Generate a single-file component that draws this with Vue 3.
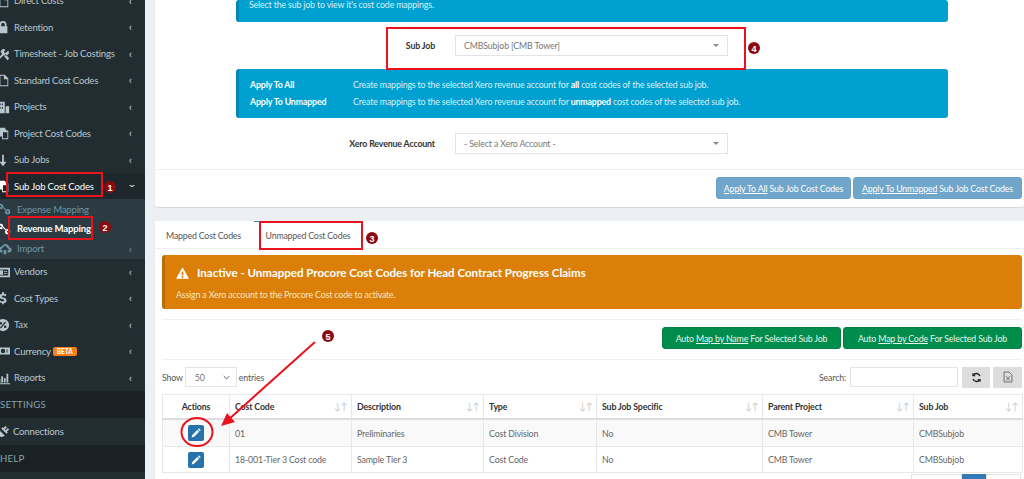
<template>
  <div class="page">
    <aside class="sidebar">
      <template v-for="item in menu" :key="item.label">
        <div v-if="item.header" class="menu-header">{{ item.label }}</div>
        <div v-else-if="item.sub" class="menu-sub" :class="{ bright: item.bright }">
          <svg class="icon" viewBox="0 0 16 16"><path :d="icons[item.icon]" fill-rule="evenodd" /></svg>
          <span>{{ item.label }}</span>
          <span v-if="item.arrow" class="chev">‹</span>
        </div>
        <div v-else class="menu-row" :class="{ open: item.open, plain: item.plain }">
          <svg class="icon" viewBox="0 0 16 16"><path :d="icons[item.icon]" fill-rule="evenodd" /></svg>
          <span>{{ item.label }}</span>
          <span v-if="item.beta" class="beta">BETA</span>
          <span v-if="item.open" class="chev down">‹</span>
          <span v-else-if="!item.plain" class="chev">‹</span>
        </div>
      </template>
    </aside>

    <main class="main">
      <section class="box top-box">
        <div class="center-col">
          <div class="info first">Select the sub job to view it's cost code mappings.</div>
          <div class="form-row sub-job-row">
            <label>Sub Job</label>
            <div class="select">CMBSubjob [CMB Tower]<i class="caret"></i></div>
          </div>
          <div class="info apply">
            <div class="apply-line"><b>Apply To All</b><span>Create mappings to the selected Xero revenue account for <b>all</b> cost codes of the selected sub job.</span></div>
            <div class="apply-line"><b>Apply To Unmapped</b><span>Create mappings to the selected Xero revenue account for <b>unmapped</b> cost codes of the selected sub job.</span></div>
          </div>
          <div class="form-row xero-row">
            <label>Xero Revenue Account</label>
            <div class="select">- Select a Xero Account -<i class="caret"></i></div>
          </div>
        </div>
        <div class="box-footer">
          <button class="btn-blue all"><u>Apply To All</u> Sub Job Cost Codes</button>
          <button class="btn-blue unmapped"><u>Apply To Unmapped</u> Sub Job Cost Codes</button>
        </div>
      </section>

      <section class="box bottom-box">
        <div class="tabs">
          <div class="tab">Mapped Cost Codes</div>
          <div class="tab active">Unmapped Cost Codes</div>
        </div>
        <div class="tab-body">
          <div class="warning">
            <h4>
              <svg viewBox="0 0 16 14" width="13" height="12"><path fill="#fff" fill-rule="evenodd" d="M8 0l8 14H0zM7 5v5h2V5zm0 6v2h2v-2z" /></svg>
              Inactive - Unmapped Procore Cost Codes for Head Contract Progress Claims
            </h4>
            <p>Assign a Xero account to the Procore Cost code to activate.</p>
          </div>
          <div class="auto-bar">
            <button class="btn-green">Auto <u>Map by Name</u> For Selected Sub Job</button>
            <button class="btn-green">Auto <u>Map by Code</u> For Selected Sub Job</button>
          </div>
          <div class="table-tools">
            <div class="show">
              Show
              <div class="len">50<svg viewBox="0 0 10 6" width="7" height="5"><path d="M1 1l4 4 4-4" fill="none" stroke="#555" stroke-width="1.4" /></svg></div>
              entries
            </div>
            <div class="search">
              Search:
              <div class="search-box"></div>
              <button class="tool">
                <svg viewBox="0 0 16 16" width="11" height="11"><path d="M13 6a5.5 5.5 0 0 0-10-1M3 10a5.5 5.5 0 0 0 10 1" fill="none" stroke="#222" stroke-width="2" /><path d="M2 1v5h5zM14 15v-5H9z" fill="#222" /></svg>
              </button>
              <button class="tool">
                <svg viewBox="0 0 14 16" width="10" height="12"><path d="M1.5 1h7l4 4v10h-11z" fill="none" stroke="#444" /><path d="M4.5 7l5 6m0-6l-5 6" stroke="#444" /></svg>
              </button>
            </div>
          </div>
          <table>
            <colgroup>
              <col v-for="c in columns" :key="c.name" :style="{ width: c.width + 'px' }" />
            </colgroup>
            <thead>
              <tr>
                <th v-for="c in columns" :key="c.name" :class="{ center: !c.sort }">
                  {{ c.name }}<span v-if="c.sort" class="sort">↓↑</span>
                </th>
              </tr>
            </thead>
            <tbody>
              <tr v-for="row in rows" :key="row[0]">
                <td class="center">
                  <button class="edit">
                    <svg viewBox="0 0 16 16" width="10" height="10"><path fill="#fff" d="M1 15l1-4 8-8 3 3-8 8zM11 2l1.5-1.5 3 3L14 5z" /></svg>
                  </button>
                </td>
                <td v-for="cell in row" :key="cell">{{ cell }}</td>
              </tr>
            </tbody>
          </table>
          <div class="pager"><span></span><span class="on"></span><span></span></div>
        </div>
      </section>
    </main>

    <svg class="notes" viewBox="0 0 1024 479" width="1024" height="479">
      <g fill="none" stroke="#e8131c" stroke-width="2">
        <rect x="7" y="173" width="95" height="23" />
        <rect x="9" y="217" width="83" height="22" />
        <rect x="260" y="222" width="102" height="27" />
        <rect x="387" y="28" width="358" height="41" />
        <ellipse cx="197" cy="432" rx="15.5" ry="14" />
        <path d="M315 342L228 420" />
      </g>
      <path d="M221 426l6-13 8 9z" fill="#e8131c" />
      <g v-for="b in badges" :key="b.n">
        <circle :cx="b.x" :cy="b.y" r="6" fill="#8c0a0f" />
        <text :x="b.x" :y="b.y + 3.5" class="badge-text" text-anchor="middle">{{ b.n }}</text>
      </g>
    </svg>
  </div>
</template>

<script setup>
const icons = {
  lock: 'M4 7V5a4 4 0 0 1 8 0v2h1v8H3V7zm2 0h4V5a2 2 0 0 0-4 0z',
  tools: 'M1 14l6-6-2-3 3-3 3 1-2 2 1 2 2-1 2-2 1 3-3 3-3-1-6 6zM9 10l2-2 4 5-2 2z',
  file: 'M4 2h6l4 4v9H4zM5 3v11h8V7H9V3z',
  city: 'M4 2h6v13H4zM5 4v2h1V4zm2 0v2h1V4zM5 8v2h1V8zm2 0v2h1V8zm4-1h4v8h-4z',
  copy: 'M4 2h6l2 3h2v10H7v-3H4zm4 5v7h5V7z',
  arrow: 'M7 2h2v8h3l-4 5-4-5h3z',
  link: 'M3 2a3 3 0 0 1 3 3 3 3 0 0 1-3 3 3 3 0 0 1-3-3 3 3 0 0 1 3-3zm0 2a1 1 0 1 0 0 2 1 1 0 0 0 0-2zM11 8a3 3 0 1 1 0 6 3 3 0 0 1 0-6zm0 2a1 1 0 1 0 0 2 1 1 0 0 0 0-2zM5 6l1-1 4 4-1 1z',
  cloud: 'M5 12a3.5 3.5 0 0 1-.5-7A4.5 4.5 0 0 1 13 6a3 3 0 0 1-1 6h-1V9h2L8 4 3 9h2z M6.5 9h3v5h-3z',
  card: 'M1 3h15v11H1zm2 2v7h11V5zm1 1h4v5H4zm5 1h4v1H9zm0 2h4v1H9z',
  dollar: 'M7 1h2v2c2 0 3 1 3 1l-1 2s-1-1-3-1-2 2 0 2.5c3 .5 4 1.5 4 3.5 0 1.5-1 2.5-3 2.8V15H7v-1.2C5 13.5 4 12.5 4 12.5l1-2s1 1.5 3 1.5 2-2 0-2.5C5 9 4 8 4 6c0-1.5 1-2.7 3-3z',
  percent: 'M8 1a7 7 0 1 1 0 14A7 7 0 0 1 8 1zM10.5 4L4.5 11l1 1 6-7zM5.5 4.5a1.5 1.5 0 1 0 0 3 1.5 1.5 0 0 0 0-3zm5 4a1.5 1.5 0 1 0 0 3 1.5 1.5 0 0 0 0-3z',
  money: 'M1 4h15v8H1zm7 1.5a2.5 2.5 0 1 0 0 5 2.5 2.5 0 0 0 0-5zM3 6v4h1V6zm9 0v4h1V6z',
  chart: 'M1 14h15v1H1zM3 9h2v4H3zm3-3h2v7H6zm3 2h2v5H9zm3-5h2v10h-2z',
  plug: 'M11 1l1.5 1.5L10 5l1 1 2.5-2.5L15 5l-2.5 2.5 1 1-1.5 1.5-6-6 1.5-1.5 1 1zM4 6l6 6c-2 2-4 2-5 1l-3 3-1-1 3-3C3 11 2.5 8 4 6z'
}

const menu = [
  { label: 'Direct Costs', icon: 'file' },
  { label: 'Retention', icon: 'lock' },
  { label: 'Timesheet - Job Costings', icon: 'tools' },
  { label: 'Standard Cost Codes', icon: 'file' },
  { label: 'Projects', icon: 'city' },
  { label: 'Project Cost Codes', icon: 'copy' },
  { label: 'Sub Jobs', icon: 'arrow' },
  { label: 'Sub Job Cost Codes', icon: 'copy', open: true },
  { label: 'Expense Mapping', icon: 'link', sub: true },
  { label: 'Revenue Mapping', icon: 'link', sub: true, bright: true },
  { label: 'Import', icon: 'cloud', sub: true, arrow: true },
  { label: 'Vendors', icon: 'card' },
  { label: 'Cost Types', icon: 'dollar' },
  { label: 'Tax', icon: 'percent' },
  { label: 'Currency', icon: 'money', beta: true },
  { label: 'Reports', icon: 'chart' },
  { label: 'SETTINGS', header: true },
  { label: 'Connections', icon: 'plug', plain: true },
  { label: 'HELP', header: true }
]

const columns = [
  { name: 'Actions', width: 67 },
  { name: 'Cost Code', width: 122, sort: true },
  { name: 'Description', width: 132, sort: true },
  { name: 'Type', width: 113, sort: true },
  { name: 'Sub Job Specific', width: 166, sort: true },
  { name: 'Parent Project', width: 151, sort: true },
  { name: 'Sub Job', width: 109, sort: true }
]

const rows = [
  ['01', 'Preliminaries', 'Cost Division', 'No', 'CMB Tower', 'CMBSubjob'],
  ['18-001-Tier 3 Cost code', 'Sample Tier 3', 'Cost Code', 'No', 'CMB Tower', 'CMBSubjob']
]

const badges = [
  { n: 1, x: 110, y: 187 },
  { n: 2, x: 105, y: 227 },
  { n: 3, x: 372, y: 238 },
  { n: 4, x: 754, y: 48 },
  { n: 5, x: 328, y: 336 }
]
</script>

<style>
html, body { margin: 0; overflow: hidden; }
</style>

<style scoped>
.page {
  position: relative;
  display: flex;
  width: 1024px;
  height: 479px;
  overflow: hidden;
  background: #ecf0f5;
  font-family: "Lato", "Open Sans", sans-serif;
  font-size: 8.8px;
  letter-spacing: -0.15px;
  color: #555;
}

.sidebar {
  width: 145px;
  flex: none;
  margin-top: -12.75px;
  background: #222d32;
  color: #b8c7ce;
  overflow: hidden;
  font-size: 9.6px;
  letter-spacing: -0.2px;
  white-space: nowrap;
}
.menu-row {
  display: flex;
  align-items: center;
  height: 26.5px;
  padding-right: 13px;
  gap: 4px;
}
.menu-row.open { background: #1e282c; color: #fff; }
.menu-row.plain { gap: 3px; height: 27px; }
.menu-sub {
  display: flex;
  align-items: center;
  height: 19.83px;
  gap: 5px;
  padding-right: 13px;
  background: #2c3b41;
  color: #6f93a5;
}
.menu-sub .icon { margin-left: -2px; }
.menu-sub.bright { color: #fff; font-weight: 700; }
.menu-header {
  display: flex;
  align-items: center;
  height: 27px;
  background: #1a2226;
  color: #8aa4af;
  letter-spacing: 0.2px;
}
.icon {
  width: 14px;
  height: 14px;
  flex: none;
  margin-left: -4px;
  fill: currentColor;
}
.chev {
  margin-left: auto;
  font-size: 12px;
  line-height: 1;
}
.chev.down { transform: rotate(-90deg); }
.beta {
  margin-left: -2px;
  padding: 1px 4px;
  border-radius: 2px;
  background: #f77f1b;
  color: #fff;
  font-size: 6.5px;
  font-weight: 700;
  letter-spacing: 0;
}

.main {
  flex: 1;
  min-width: 0;
  padding-left: 10px;
}
.box {
  background: #fff;
  box-shadow: 0 1px 1px rgba(0, 0, 0, 0.1);
}
.top-box {
  height: 207px;
  border-radius: 0 0 3px 3px;
  display: flex;
  flex-direction: column;
}
.center-col {
  width: 712px;
  margin-left: 81px;
}
.info {
  background: #00a0d0;
  border-left: 3px solid #0089b5;
  border-radius: 3px;
  color: #d8f1f9;
}
.info.first {
  height: 22px;
  padding-left: 10px;
  line-height: 10px;
}
.form-row {
  display: flex;
  align-items: center;
  gap: 20px;
}
.form-row label {
  width: 199px;
  text-align: right;
  color: #333;
  font-weight: 700;
}
.sub-job-row { height: 47px; }
.xero-row { height: 51px; }
.select {
  position: relative;
  width: 273px;
  height: 21px;
  box-sizing: border-box;
  padding-left: 8px;
  line-height: 19px;
  border: 1px solid #e4e4e4;
  color: #777;
}
.caret {
  position: absolute;
  right: 8px;
  top: 8px;
  border: 3.5px solid transparent;
  border-top-color: #888;
  border-bottom: 0;
}
.info.apply {
  height: 49px;
  padding: 7px 0 0 11px;
  box-sizing: border-box;
}
.apply-line {
  display: flex;
  height: 17px;
  align-items: center;
}
.apply-line > b {
  width: 103px;
  color: #fff;
}
.apply-line span b { color: #fff; }
.box-footer {
  flex: 1;
  border-top: 1px solid #f0f0f0;
  display: flex;
  justify-content: flex-end;
  gap: 2px;
  padding: 7px 2px 0 0;
}
button {
  font-family: inherit;
  font-size: inherit;
  letter-spacing: inherit;
  cursor: pointer;
}
.btn-blue {
  height: 22px;
  padding: 0;
  border: 1px solid #6ba3c7;
  border-radius: 3px;
  background: #6fa6ca;
  color: #fff;
}
.btn-blue.all { width: 135px; }
.btn-blue.unmapped { width: 169px; }

.bottom-box {
  margin-top: 14px;
  height: 270px;
}
.tabs {
  display: flex;
  height: 27px;
  border-bottom: 1px solid #f0f0f0;
  letter-spacing: -0.2px;
}
.tab {
  width: 97px;
  line-height: 30px;
  text-align: center;
  color: #555;
}
.tab.active {
  width: 108px;
  margin-left: 2px;
  box-sizing: border-box;
  border-top: 1px solid #3c8dbc;
  line-height: 28px;
}
.tab-body {
  padding: 6px 2px 0 7px;
}
.warning {
  height: 54px;
  box-sizing: border-box;
  padding: 9px 0 0 11px;
  background: #db7f08;
  border-left: 3px solid #b96b06;
  border-radius: 3px;
  color: #fff;
}
.warning h4 {
  display: flex;
  align-items: center;
  gap: 8px;
  margin: 0;
  font-size: 11.5px;
  font-weight: 700;
  letter-spacing: 0;
  line-height: 18px;
}
.warning p {
  margin: 7px 0 0;
  color: #f8e4c8;
}
.auto-bar {
  display: flex;
  justify-content: flex-end;
  gap: 2px;
  height: 41px;
  margin-top: 10px;
  padding-top: 7px;
  box-sizing: border-box;
  border-top: 1px solid #f0f0f0;
  border-bottom: 1px solid #f0f0f0;
}
.btn-green {
  width: 179px;
  height: 22px;
  padding: 0;
  border: 1px solid #008044;
  border-radius: 3px;
  background: #008d4c;
  color: #e9f5ef;
}
.table-tools {
  display: flex;
  justify-content: space-between;
  align-items: center;
  height: 34px;
}
.show, .search {
  display: flex;
  align-items: center;
  gap: 2px;
}
.len {
  display: flex;
  align-items: center;
  justify-content: space-between;
  width: 52px;
  height: 20px;
  padding: 0 6px 0 9px;
  box-sizing: border-box;
  border: 1px solid #e4e4e4;
  color: #777;
}
.search { gap: 4px; }
.search-box {
  width: 108px;
  height: 20px;
  box-sizing: border-box;
  border: 1px solid #e4e4e4;
}
.tool {
  width: 28px;
  height: 21px;
  padding: 0;
  border: none;
  background: #ddd;
  display: flex;
  align-items: center;
  justify-content: center;
}
.tool + .tool { width: 29px; margin-left: -1px; }
table {
  width: 860px;
  table-layout: fixed;
  border-collapse: collapse;
}
th, td {
  border: 1px solid #e8e8e8;
  padding: 0 5px;
  text-align: left;
  white-space: nowrap;
}
th {
  position: relative;
  height: 23px;
  border-bottom: 2px solid #ddd;
  color: #333;
}
td { height: 25px; color: #666; }
tbody tr:first-child td { height: 26px; }
.center { text-align: center; }
tbody tr:first-child { background: #f9f9f9; }
.sort {
  position: absolute;
  right: 4px;
  top: 5px;
  color: #ccc;
  font-size: 10px;
  font-weight: 400;
  letter-spacing: -1px;
}
.edit {
  display: inline-flex;
  align-items: center;
  justify-content: center;
  vertical-align: middle;
  width: 16px;
  height: 16px;
  padding: 0;
  border: none;
  border-radius: 2px;
  background: #2673ab;
}
.pager {
  display: flex;
  justify-content: flex-end;
  height: 6px;
  margin-top: 1px;
  margin-right: 1px;
}
.pager span {
  width: 49px;
  border: 1px solid #e4e4e4;
  border-bottom: 0;
}
.pager .on { width: 22px; background: #337ab7; border-color: #337ab7; }
.pager span:last-child { width: 33px; }

.notes {
  position: absolute;
  left: 0;
  top: 0;
  pointer-events: none;
}
.badge-text {
  fill: #fff;
  font-size: 9px;
  font-weight: 700;
  font-family: "Liberation Sans", sans-serif;
  letter-spacing: 0;
}
</style>
